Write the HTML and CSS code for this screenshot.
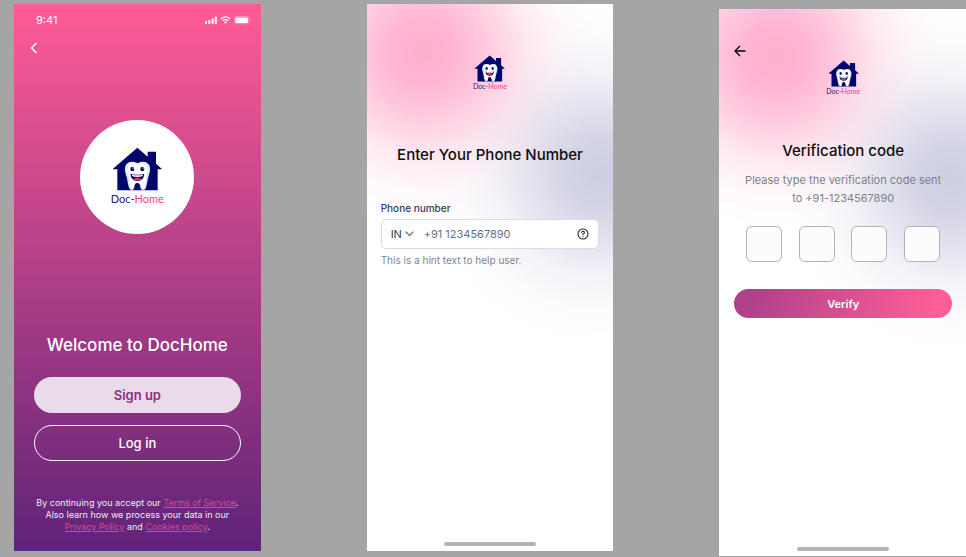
FILE: index.html
```html
<!DOCTYPE html>
<html lang="en">
<head>
<meta charset="utf-8">
<meta name="viewport" content="width=device-width, initial-scale=1">
<title>DocHome</title>
<link rel="stylesheet" href="styles.css">
</head>
<body>
<svg class="defs" width="0" height="0" aria-hidden="true">
  <symbol id="house" viewBox="0 0 162 132">
    <path fill="#00066b" d="M82 2 L113 29 V14 H138 V50 L155 65 V67 H143 V130 H22 V67 H9 V65 Z"/>
    <path fill="#dcebf4" d="M83 49 C75 43 57 41 49 52 C41 64 46 78 50 90 C53 101 53 116 59 126 C63 132 72 130 73 121 C74 113 76 108 82 108 C88 108 90 113 91 121 C92 130 102 132 106 126 C112 116 111 101 115 90 C119 78 124 64 116 52 C108 41 91 43 83 49 Z"/>
    <path fill="#ffffff" d="M83 53 C75 47 63 46 56 54 C49 64 52 78 56 90 C60 102 58 114 63 124 C67 128 70 125 71 119 C72 110 75 104 82 104 C89 104 92 110 94 119 C95 125 99 128 101 124 C105 114 105 102 108 90 C112 78 115 64 109 54 C102 46 91 47 83 53 Z"/>
    <ellipse cx="67" cy="66" rx="6" ry="7" fill="#00066b"/>
    <ellipse cx="97" cy="66" rx="6" ry="7" fill="#00066b"/>
    <circle cx="69" cy="63" r="2" fill="#fff"/>
    <circle cx="99" cy="63" r="2" fill="#fff"/>
    <path fill="#00066b" d="M61 81 Q82 86 103 81 Q101 102 82 102 Q63 102 61 81 Z"/>
    <path fill="#fff" d="M65 83 Q82 87 99 83 L97 88 Q82 92 67 88 Z"/>
    <path fill="#ff2767" d="M69 96 Q82 88 95 96 Q82 105 69 96 Z"/>
  </symbol>
</svg>

<main class="board">
  <section class="screen welcome">
    <header class="status">
      <span>9:41</span>
      <svg width="46" height="10" viewBox="0 0 46 10" fill="#fff" aria-hidden="true">
        <rect x="0" y="6" width="2" height="3" rx=".6"/>
        <rect x="3.3" y="5" width="2" height="4" rx=".6"/>
        <rect x="6.6" y="3.4" width="2" height="5.6" rx=".6"/>
        <rect x="9.8" y="1.5" width="2" height="7.5" rx=".6"/>
        <g fill="none" stroke="#fff" stroke-width="1.3">
          <path d="M15.8 4 Q20.5 -.2 25.2 4"/>
          <path d="M17.7 5.8 Q20.5 3.4 23.3 5.8"/>
        </g>
        <path d="M18.9 7 Q20.5 5.8 22.1 7 L20.5 8.8 Z"/>
        <rect x="29.6" y="1.6" width="14.2" height="7.2" rx="2" fill="none" stroke="#fff" stroke-opacity=".5" stroke-width=".7"/>
        <rect x="30.4" y="2.4" width="12.6" height="5.6" rx="1.2"/>
        <path d="M44.6 4 Q45.8 5.2 44.6 6.4 Z" opacity=".6"/>
      </svg>
    </header>
    <button class="icon-btn back" type="button" aria-label="Back">
      <svg width="8" height="12" viewBox="0 0 8 12" fill="none" stroke="#fff" stroke-width="1.5"><path d="M6.5 1 L1.5 6 L6.5 11"/></svg>
    </button>
    <div class="badge">
      <div class="logo large"><svg aria-hidden="true"><use href="#house"/></svg><span>Doc-<b>Home</b></span></div>
    </div>
    <h1 class="welcome-title">Welcome to DocHome</h1>
    <div class="actions">
      <button class="pill solid" type="button">Sign up</button>
      <button class="pill outline" type="button">Log in</button>
    </div>
    <p class="legal">By continuing you accept our <a href="#">Terms of Service</a>.<br>Also learn how we process your data in our<br><a href="#">Privacy Policy</a> and <a href="#">Cookies policy</a>.</p>
  </section>

  <section class="screen glow phone">
    <div class="logo"><svg aria-hidden="true"><use href="#house"/></svg><span>Doc-<b>Home</b></span></div>
    <h2 class="title">Enter Your Phone Number</h2>
    <form class="phone-form">
      <label for="phone">Phone number</label>
      <div class="field">
        <select aria-label="Country"><option>IN</option></select>
        <svg class="chevron" width="9" height="6" viewBox="0 0 9 6" fill="none" stroke="#667085" stroke-width="1.2" stroke-linecap="round" stroke-linejoin="round" aria-hidden="true"><path d="M1 1 L4.5 4.5 L8 1"/></svg>
        <input id="phone" type="tel" placeholder="+91 1234567890">
        <svg width="12" height="12" viewBox="0 0 12 12" fill="none" stroke="#22252c" stroke-width="1.1" stroke-linecap="round" aria-hidden="true"><circle cx="6" cy="6" r="5"/><path d="M4.6 4.7 Q4.8 3.3 6.1 3.3 Q7.5 3.4 7.4 4.7 Q7.3 5.5 6 6.3 V6.7"/><path d="M6 8.5 V8.6"/></svg>
      </div>
      <p class="hint">This is a hint text to help user.</p>
    </form>
    <div class="home-bar"></div>
  </section>

  <section class="screen glow verify">
    <button class="icon-btn arrow" type="button" aria-label="Back">
      <svg width="12" height="12" viewBox="0 0 12 12" fill="none" stroke="#000" stroke-width="1.4" stroke-linejoin="round"><path d="M11.5 6 H1.5 M6 1 L1 6 L6 11"/></svg>
    </button>
    <div class="logo"><svg aria-hidden="true"><use href="#house"/></svg><span>Doc-<b>Home</b></span></div>
    <h2 class="title">Verification code</h2>
    <p class="message">Please type the verification code sent<br>to +91-1234567890</p>
    <form class="code-form">
      <div class="code">
        <input type="text" inputmode="numeric" maxlength="1" aria-label="Digit 1">
        <input type="text" inputmode="numeric" maxlength="1" aria-label="Digit 2">
        <input type="text" inputmode="numeric" maxlength="1" aria-label="Digit 3">
        <input type="text" inputmode="numeric" maxlength="1" aria-label="Digit 4">
      </div>
      <button class="verify-btn" type="button">Verify</button>
    </form>
    <div class="home-bar"></div>
  </section>
</main>
</body>
</html>
```
FILE: styles.css
```css
* { box-sizing: border-box; }

body {
  margin: 0;
  background: #a5a5a5;
  font-family: Inter, "Liberation Sans", sans-serif;
}

h1, h2, p { margin: 0; }

button, input, select { font: inherit; }

.defs { position: absolute; }

.board {
  display: grid;
  grid-template-columns: repeat(3, minmax(0, 1fr));
  gap: 106px;
  min-height: 100vh;
  padding: 4px 0 6px 14px;
}

.screen {
  display: flex;
  flex-direction: column;
  align-items: center;
}

/* Logo: house mark over the brand name */
.logo {
  display: flex;
  flex-direction: column;
  align-items: center;
  color: #20246f;
  font-family: Lato, sans-serif;
  font-size: 7px;
  line-height: 8px;
}

.logo svg { width: 33px; height: 27px; }
.logo b { color: #ff3d7d; font-weight: 400; }

.logo.large { font-size: 11px; line-height: 16px; }
.logo.large svg { width: 54px; height: 44px; }

.icon-btn {
  display: flex;
  align-self: flex-start;
  padding: 0;
  border: 0;
  background: none;
}

/* Welcome */
.welcome {
  padding: 8px 20px 18px;
  background: linear-gradient(#ff5b95, #5f2379);
  color: #fff;
}

.status {
  display: flex;
  align-self: stretch;
  align-items: center;
  justify-content: space-between;
  height: 16px;
  margin-right: -10px;
  padding-left: 2px;
  font-size: 11px;
}

.back { margin: 14px 0 0 -4px; }

.badge {
  display: flex;
  align-items: center;
  justify-content: center;
  width: 114px;
  height: 114px;
  margin-top: 66px;
  border-radius: 50%;
  background: #fff;
}

.welcome-title {
  margin-top: auto;
  font-size: 17px;
  font-weight: 500;
  line-height: 24px;
  white-space: nowrap;
}

.actions {
  display: grid;
  align-self: stretch;
  gap: 12px;
  margin-top: 20px;
}

.pill {
  height: 36px;
  border-radius: 18px;
  font-size: 13px;
}

.solid {
  border: 0;
  background: #eadbe8;
  color: #8a2f80;
  font-weight: 600;
}

.outline {
  border: 1px solid #fff;
  background: none;
  color: #fff;
  font-weight: 500;
}

.legal {
  margin-top: 36px;
  color: #f4e8f4;
  font-size: 9px;
  line-height: 12px;
  text-align: center;
  white-space: nowrap;
}

.legal a { color: #d9488f; }

/* Shared light screens */
.glow {
  background:
    radial-gradient(circle 170px at 56px 48px, rgb(255 174 206) 0%, rgb(255 174 206 / .9) 20%, rgb(255 174 206 / .62) 40%, rgb(255 174 206 / .28) 60%, rgb(255 174 206 / .08) 80%, transparent 100%),
    radial-gradient(circle 170px at 232px 170px, rgb(206 206 227) 0%, rgb(206 206 227 / .88) 20%, rgb(206 206 227 / .58) 40%, rgb(206 206 227 / .25) 60%, rgb(206 206 227 / .07) 80%, transparent 100%),
    #fff;
}

.title {
  color: #0c0c0f;
  font-size: 15px;
  font-weight: 500;
  line-height: 20px;
  white-space: nowrap;
}

.home-bar {
  width: 92px;
  height: 4px;
  margin-top: auto;
  border-radius: 2px;
  background: #b3b3b3;
}

/* Phone number */
.phone { padding: 51px 14px 5px; }
.phone .title { margin-top: 55px; }

.phone-form {
  display: grid;
  grid-template-columns: minmax(0, 1fr);
  align-self: stretch;
  margin-top: 36px;
  color: #344054;
  font-size: 10px;
  line-height: 14px;
}

.phone-form label { font-weight: 500; }

.field {
  display: flex;
  align-items: center;
  height: 30px;
  margin: 4px 0;
  padding: 0 9px;
  border: 1px solid #d9dce5;
  border-radius: 5px;
  background: #fff;
  font-size: 11px;
}

.field select {
  width: 14px;
  padding: 0;
  border: 0;
  background: none;
  color: #344054;
  appearance: none;
}

.field svg { flex: none; }

.field input {
  flex: 1;
  width: 0;
  min-width: 0;
  padding: 0;
  margin-left: 10px;
  border: 0;
  background: none;
}

.field input::placeholder { color: #667085; opacity: 1; }

.hint { color: #7b849b; }

/* Verification */
.verify {
  margin: 5px 0 -5px;
  padding: 36px 14px 5px 15px;
}

.verify .logo { margin-top: 3px; }
.verify .title { margin-top: 46px; }

.message {
  margin-top: 10px;
  color: #808085;
  font-size: 11px;
  line-height: 18px;
  text-align: center;
  white-space: nowrap;
}

.code-form {
  display: grid;
  align-self: stretch;
  gap: 27px;
  margin-top: 19px;
}

.code {
  display: flex;
  justify-content: space-between;
  padding: 0 12px;
}

.code input {
  width: 36px;
  height: 36px;
  padding: 0;
  border: 1px solid #b4b4b8;
  border-radius: 6px;
  background: #fcfcfc;
  text-align: center;
}

.verify-btn {
  height: 29px;
  border: 0;
  border-radius: 15px;
  background: linear-gradient(110deg, #ae4189 8%, #ff5f98 92%);
  color: #fff;
  font-size: 11px;
  font-weight: 600;
}
```
